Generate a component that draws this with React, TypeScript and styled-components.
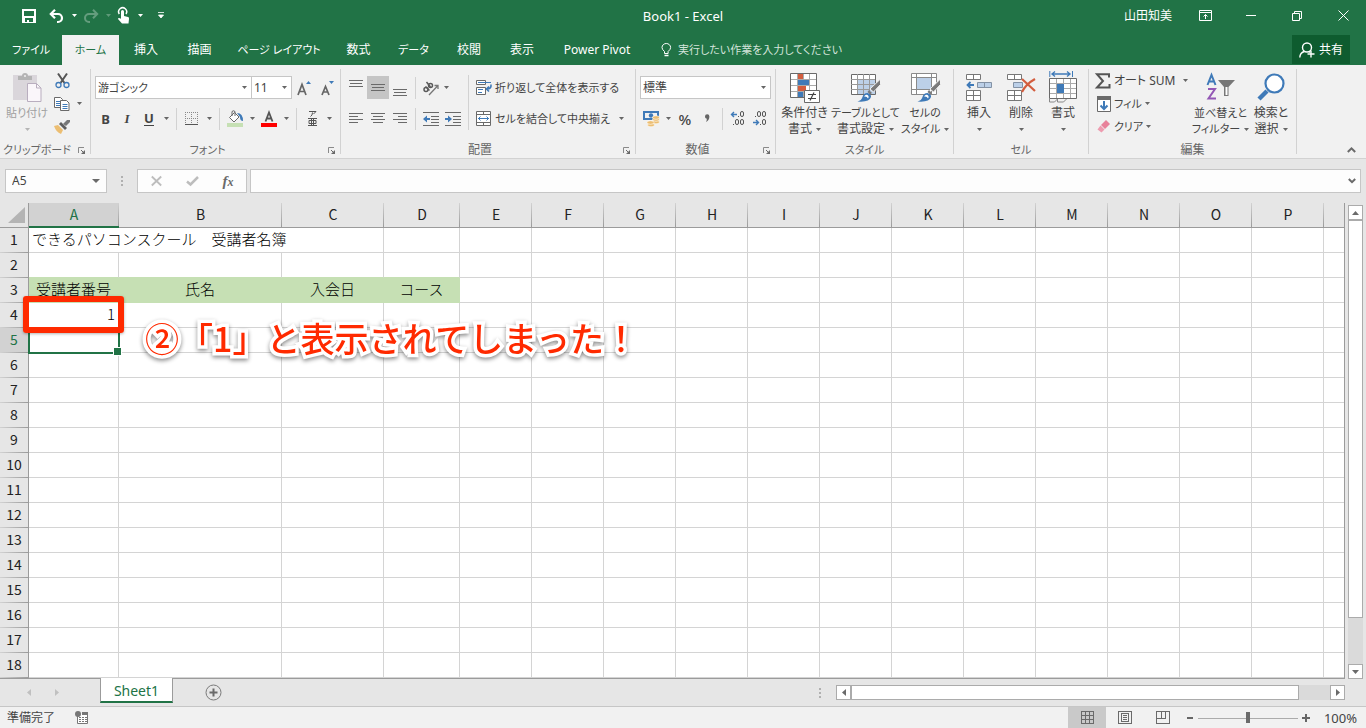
import React from "react";
import styled, { createGlobalStyle, css } from "styled-components";

const UI_FONT = `"Noto Sans", "Noto Sans CJK JP", sans-serif`;
const CELL_FONT = `"Noto Sans CJK JP", "Noto Sans", sans-serif`;

const c = {
  green: "#217346",
  darkGreen: "#0e5c2f",
  ribbon: "#f1f1f1",
  chrome: "#e6e6e6",
  line: "#d2d2d2",
  box: "#c6c6c6",
  text: "#444444",
  muted: "#666666",
  icon: "#6a6a6a",
  blue: "#3f7ab8",
  pale: "#bcd0e8",
  grid: "#d4d4d4",
  edge: "#9b9b9b",
  head: "#c6e0b4",
  red: "#ff2a00",
};

const Global = createGlobalStyle`
  * { box-sizing: border-box; }
  body { margin: 0; background: ${c.chrome}; }
  button, input, select {
    font: inherit; color: inherit; margin: 0; padding: 0;
    border: 0; border-radius: 0; background: transparent; outline: 0;
  }
  svg { display: block; flex: none; overflow: visible; }
`;

const Page = styled.div`
  display: flex;
  flex-direction: column;
  min-height: 100vh;
  overflow-x: hidden;
  font-family: ${UI_FONT};
  font-size: 12px;
  line-height: 16px;
  font-feature-settings: "palt";
  color: ${c.text};
  white-space: nowrap;
`;

/* Labels made mostly of kana are set one size smaller. */
const isKana = (s = "") => (s.match(/[ぁ-んァ-ヶー]/g) ?? []).length > 1;
const Label = styled.span<{ $kana?: boolean }>`
  font-size: ${(p) => (p.$kana ? 11 : 12)}px;
`;
const Text = ({ children }: { children?: string }) => <Label $kana={isKana(children)}>{children}</Label>;

/* ---------- title bar ---------- */
const TitleBar = styled.header`
  display: grid;
  grid-template-columns: 1fr auto 1fr;
  align-items: center;
  height: 35px;
  padding-bottom: 4px;
  background: ${c.green};
  color: #fff;
`;
const QuickAccess = styled.div`
  display: flex;
  padding-left: 14px;
`;
const Title = styled.h1`
  margin: 0;
  font-size: 13px;
  font-weight: 400;
`;
const WindowControls = styled.div`
  display: flex;
  justify-content: flex-end;
  align-items: center;
`;
const UserName = styled.span`
  margin-right: 10px;
`;
const WindowButton = styled.button`
  display: flex;
  align-items: center;
  justify-content: center;
  width: 46px;
  height: 31px;
`;

/* ---------- ribbon tabs ---------- */
const TabRow = styled.nav`
  display: flex;
  height: 30px;
  padding-right: 16px;
  background: ${c.green};
  color: #fff;
`;
const TabList = styled.div`
  display: flex;
`;
const Tab = styled.button<{ $w: number; $active?: boolean }>`
  width: ${(p) => p.$w}px;
  flex: none;
  ${(p) => p.$active && css`background: ${c.ribbon}; color: ${c.green};`}
`;
const TellMe = styled.label`
  display: flex;
  align-items: center;
  gap: 6px;
  flex: 1;
  padding-left: 15px;
`;
const TellMeInput = styled.input`
  flex: 1;
  max-width: 240px;
  font-size: 11px;
  &::placeholder { color: #d3e3da; opacity: 1; }
`;
const Share = styled.button`
  display: flex;
  align-items: center;
  justify-content: center;
  gap: 4px;
  width: 58px;
  height: 29px;
  background: ${c.darkGreen};
`;

/* ---------- ribbon ---------- */
const Ribbon = styled.section`
  display: flex;
  height: 94px;
  background: ${c.ribbon};
  border-bottom: 1px solid ${c.line};
`;
const GroupBox = styled.div<{ $w: number }>`
  display: flex;
  flex-direction: column;
  flex: none;
  width: ${(p) => p.$w}px;
`;
const GroupBody = styled.div<{ $pad?: number }>`
  display: flex;
  height: 76px;
  padding-left: ${(p) => p.$pad ?? 0}px;
`;
const GroupFoot = styled.div`
  display: flex;
  align-items: center;
  height: 17px;
`;
const GroupLabel = styled.div`
  flex: 1;
  text-align: center;
  color: ${c.muted};
`;
const Launcher = styled.button`
  display: flex;
  justify-content: center;
  width: 16px;
  padding-top: 2px;
`;
const Divider = styled.div`
  flex: none;
  width: 1px;
  margin: 4px 0;
  background: ${c.line};
`;
const Rows = styled.div`
  display: flex;
  flex-direction: column;
  gap: 8px;
  padding-top: 11px;
`;
const CompactRows = styled.div<{ $w: number }>`
  display: flex;
  flex-direction: column;
  padding-top: 4px;
  width: ${(p) => p.$w}px;
`;
const Row = styled.div`
  display: flex;
  align-items: center;
  height: 23px;
`;
const Tool = styled.button<{ $w?: number; $on?: boolean }>`
  display: flex;
  align-items: center;
  justify-content: center;
  flex: none;
  width: ${(p) => p.$w ?? 22}px;
  height: 23px;
  background: ${(p) => (p.$on ? "#c5c5c5" : "transparent")};
`;
const Sep = styled.div`
  width: 9px;
  height: 22px;
  flex: none;
  background: linear-gradient(${c.line}, ${c.line}) 4px 0 / 1px 100% no-repeat;
`;
const TallSep = styled(Sep)`
  height: 55px;
  margin-top: 10px;
`;
const Letter = styled.span<{ $kind: "b" | "i" | "u" | "p" }>`
  font-size: ${(p) => (p.$kind === "p" ? 15 : 13)}px;
  line-height: 16px;
  font-weight: ${(p) => (p.$kind === "p" ? 500 : 700)};
  ${(p) => p.$kind === "i" && css`font-style: italic; font-family: "Liberation Serif", serif;`}
  ${(p) => p.$kind === "u" && css`border-bottom: 1px solid ${c.text}; line-height: 13px;`}
`;
const Combo = styled.span<{ $w: number }>`
  display: grid;
  grid-template-columns: 1fr 14px;
  align-items: center;
  flex: none;
  width: ${(p) => p.$w}px;
  height: 23px;
  background: #fff;
  border: 1px solid ${c.box};
  & + & { border-left: 0; }
`;
const Select = styled.select<{ $kana?: boolean }>`
  grid-area: 1 / 1 / 2 / 3;
  width: 100%;
  height: 21px;
  padding-left: 2px;
  appearance: none;
  font-size: ${(p) => (p.$kana ? 11 : 12)}px;
`;
const ComboArrow = styled.span`
  grid-area: 1 / 2 / 2 / 3;
  display: flex;
  justify-content: center;
  pointer-events: none;
`;
const LabelTool = styled.button<{ $pad?: number }>`
  display: flex;
  align-items: center;
  gap: 3px;
  height: 23px;
  padding-left: ${(p) => p.$pad ?? 0}px;
`;
const Big = styled.button<{ $w: number; $off?: boolean }>`
  display: flex;
  flex-direction: column;
  align-items: center;
  flex: none;
  width: ${(p) => p.$w}px;
  height: 76px;
  padding-top: 6px;
  color: ${(p) => (p.$off ? "#a0a0a0" : c.text)};
`;
const BigIcon = styled.span`
  display: flex;
  align-items: center;
  height: 32px;
  margin-bottom: 2px;
`;
const BigLine = styled.span`
  display: flex;
  align-items: center;
  justify-content: center;
  gap: 4px;
  height: 16px;
`;
const Collapse = styled.button`
  display: flex;
  align-self: flex-end;
  margin: 0 10px 5px auto;
`;

/* ---------- formula bar ---------- */
const FormulaBar = styled.div`
  display: flex;
  align-items: center;
  height: 44px;
  padding: 0 5px;
`;
const Field = styled.div<{ $w?: number }>`
  display: flex;
  align-items: center;
  height: 24px;
  background: #fdfdfd;
  border: 1px solid ${c.box};
  ${(p) => (p.$w ? css`width: ${p.$w}px; flex: none;` : css`flex: 1; min-width: 0;`)}
`;
const FieldInput = styled.input`
  flex: 1;
  min-width: 0;
  padding-left: 6px;
`;
const FieldButton = styled.button<{ $w: number }>`
  display: flex;
  align-items: center;
  justify-content: center;
  width: ${(p) => p.$w}px;
  height: 22px;
`;
const Grip = styled.span<{ $w: number }>`
  display: flex;
  justify-content: center;
  width: ${(p) => p.$w}px;
`;
const Fx = styled.span`
  font: italic 700 15px "Liberation Serif", serif;
  color: ${c.icon};
  & > small { font-size: 12px; }
`;

/* ---------- sheet ---------- */
const Workspace = styled.main`
  display: flex;
  flex: 1;
`;
const SheetArea = styled.div`
  position: relative;
  flex: 1;
  min-width: 0;
  border-right: 1px solid ${c.edge};
  border-bottom: 1px solid ${c.edge};
  background: #fff;
`;
const Sheet = styled.table`
  width: 100%;
  table-layout: fixed;
  border-collapse: separate;
  border-spacing: 0;
  font-family: ${CELL_FONT};
  font-size: 15px;
  font-weight: 300;
  line-height: 20px;
  font-feature-settings: normal;
  color: #000;
`;
const Col = styled.col<{ $w?: number }>`
  ${(p) => p.$w && css`width: ${p.$w}px;`}
`;
const headText = css<{ $on?: boolean }>`
  height: 25px;
  font-size: 14px;
  font-weight: 400;
  color: ${(p) => (p.$on ? c.green : "#222")};
`;
const ColHead = styled.th<{ $on?: boolean }>`
  ${headText}
  padding: 0 0 2px;
  border-bottom: ${(p) => (p.$on ? `2px solid ${c.green}` : `1px solid ${c.edge}`)};
  background: linear-gradient(${c.line}, ${c.edge}) right / 1px 100% no-repeat
    ${(p) => (p.$on ? "#d2d2d2" : c.chrome)};
  &:last-child { background: ${c.chrome}; }
`;
const Corner = styled.th`
  padding: 0 3px 0 0;
  background: ${c.chrome};
  border-bottom: 1px solid ${c.edge};
  border-right: 1px solid ${c.edge};
  & > svg { margin-left: auto; }
`;
const RowHead = styled.th<{ $on?: boolean }>`
  ${headText}
  padding: 0 0 4px;
  border-right: 1px solid ${c.edge};
  background: linear-gradient(90deg, ${c.line}, ${c.edge}) bottom / 100% 1px no-repeat
    ${(p) => (p.$on ? "#d2d2d2" : c.chrome)};
`;
const Cell = styled.td<{ $fill?: boolean; $over?: boolean; $align?: string }>`
  position: relative;
  height: 25px;
  padding: 0 3px 2px;
  text-align: ${(p) => p.$align ?? "left"};
  border-right: 1px solid ${(p) => (p.$fill ? c.head : c.grid)};
  border-bottom: 1px solid ${(p) => (p.$fill || p.$over ? c.head : c.grid)};
  background: ${(p) => (p.$fill ? c.head : "#fff")};
  &:last-child { border-right: 0; }
`;
const Selection = styled.span`
  position: absolute;
  z-index: 1;
  inset: -1px -2px -2px -1px;
  border: 2px solid ${c.green};
  &::after {
    content: "";
    position: absolute;
    right: -4px;
    bottom: -4px;
    width: 7px;
    height: 7px;
    background: ${c.green};
    border: 1px solid #fff;
  }
`;
const Highlight = styled.span`
  position: absolute;
  z-index: 2;
  inset: -7px -6px -6px;
  border: 6px solid ${c.red};
  border-radius: 3px;
  box-shadow: 0 1px 3px rgba(0, 0, 0, 0.3);
`;
const Annotation = styled.p`
  position: absolute;
  z-index: 2;
  left: 145px;
  top: 113px;
  margin: 0;
  font-family: ${CELL_FONT};
  font-size: 34px;
  line-height: 44px;
  font-weight: 500;
  font-feature-settings: normal;
  color: ${c.red};
  -webkit-text-stroke: 7px #fff;
  paint-order: stroke fill;
  stroke-linejoin: round;
  filter: drop-shadow(0 2px 2px rgba(0, 0, 0, 0.45));
`;

/* ---------- scroll bars ---------- */
const VScroll = styled.div`
  display: flex;
  flex-direction: column;
  width: 15px;
  margin: 2px 3px 0;
  background: #dadada;
`;
const HScroll = styled.div`
  display: flex;
  width: 509px;
  height: 15px;
  background: #dadada;
`;
const ScrollButton = styled.button`
  display: flex;
  align-items: center;
  justify-content: center;
  flex: none;
  width: 15px;
  height: 15px;
  background: #fff;
  border: 1px solid #ababab;
`;
const Thumb = styled.div<{ $size: string }>`
  flex: 0 0 ${(p) => p.$size};
  background: #fff;
  border: 1px solid #ababab;
`;
const Fill = styled.div`
  flex: 1;
`;

/* ---------- sheet tabs & status ---------- */
const SheetTabs = styled.div`
  display: flex;
  align-items: center;
  height: 27px;
  padding-right: 21px;
`;
const Arrows = styled.div`
  display: flex;
  width: 100px;
  padding-left: 15px;
`;
const SheetTab = styled.button`
  position: relative;
  align-self: flex-start;
  width: 73px;
  height: 25px;
  margin-top: -1px;
  padding-top: 2px;
  background: #fff;
  border: solid ${c.edge};
  border-width: 0 1px;
  border-bottom: 2px solid ${c.green};
  color: ${c.green};
  font-size: 14px;
`;
const AddSheet = styled.button`
  margin-left: 32px;
`;
const StatusBar = styled.footer`
  display: flex;
  align-items: center;
  height: 22px;
  padding: 0 9px 0 7px;
  border-top: 1px solid ${c.box};
  background: ${c.ribbon};
`;
const Macro = styled.button`
  margin-left: 20px;
`;
const ViewButton = styled.button<{ $on?: boolean }>`
  display: flex;
  align-items: center;
  justify-content: center;
  width: 38px;
  height: 21px;
  background: ${(p) => (p.$on ? "#c9c9c9" : "transparent")};
`;
const ZoomButton = styled.button`
  display: flex;
  justify-content: center;
  width: 16px;
`;
const ZoomSlider = styled.input`
  appearance: none;
  width: 100px;
  height: 12px;
  background: linear-gradient(#ababab, #ababab) 0 6px / 100% 1px no-repeat;
  &::-webkit-slider-thumb {
    appearance: none;
    width: 4px;
    height: 11px;
    background: ${c.icon};
  }
`;
const ZoomValue = styled.span`
  width: 43px;
  text-align: right;
  font-size: 13px;
`;

/* ---------- icons ---------- */
const Ico = ({ w, h, children, crisp }: { w: number; h: number; children: React.ReactNode; crisp?: boolean }) => (
  <svg width={w} height={h} viewBox={`0 0 ${w} ${h}`} fill="none" shapeRendering={crisp ? "crispEdges" : "auto"} aria-hidden="true">
    {children}
  </svg>
);
const Caret = ({ color = c.muted }: { color?: string }) => (
  <Ico w={5} h={3}><path d="M0 0h5L2.5 3z" fill={color} /></Ico>
);
const LauncherIcon = () => (
  <Ico w={8} h={8}>
    <path d="M.5 6V.5H6" stroke="#8a8a8a" />
    <path d="M3 3l2.500 2.500" stroke={c.icon} />
    <path d="M7 3v4H3z" fill={c.icon} />
  </Ico>
);
const Lines = ({ rows }: { rows: [number, number, number][] }) => (
  <Ico w={14} h={18} crisp>
    {rows.map(([x, y, w]) => <rect key={y} x={x} y={y} width={w} height={1} fill={c.icon} />)}
  </Ico>
);
const SaveIcon = () => (
  <Ico w={14} h={14}>
    <path fillRule="evenodd" fill="#fff" d="M0 0h14v14H0zM2 2v5h10V2zM3 9v4h2v-2h2v2h4V9z" />
  </Ico>
);
const UndoIcon = () => (
  <Ico w={16} h={14}>
    <path d="M6 .8 1.800 5 6 9.200M2 5h7a4 4 0 0 1 0 8H8" stroke="#fff" strokeWidth={2.2} />
  </Ico>
);
const RedoIcon = () => (
  <Ico w={16} h={14}>
    <path opacity=".3" d="m10 .8 4.200 4.200L10 9.200M14 5H6a4 4 0 0 0 0 8h1" stroke="#fff" strokeWidth={2} />
  </Ico>
);
const TouchIcon = () => (
  <Ico w={14} h={17}>
    <path d="M2.300 7A4 4 0 1 1 9 7" stroke="#fff" strokeWidth={1.500} />
    <path d="M4 4.500a1.500 1.500 0 0 1 3 0V9l4 1c1 .3 1 1 1 2l-.5 4.500H5L1 12c0-1 1-1.300 3-.3z" fill="#fff" />
  </Ico>
);
const PasteIcon = () => (
  <Ico w={29} h={30}>
    <path d="M0 3h24v25H0z" fill="#dad6db" />
    <path d="M5 8V4h4a3 3 0 0 1 6 0h4v4z" fill="#b4b4b4" />
    <circle cx="12" cy="4" r="1" fill="#f1f1f1" />
    <path d="M14.500 11.500h9l4.500 4.500v13.500H14.500z" fill="#faf6fa" stroke="#b9aebf" />
    <path d="M23.500 11.500V16H28" stroke="#b9aebf" />
  </Ico>
);
const CutIcon = () => (
  <Ico w={15} h={16}>
    <path d="M3 .5 9.500 10M12 .5 5.500 10" stroke="#555" strokeWidth={2} />
    <circle cx="3.500" cy="12" r="2.500" stroke={c.blue} strokeWidth={1.300} />
    <circle cx="11.500" cy="12" r="2.500" stroke={c.blue} strokeWidth={1.300} />
  </Ico>
);
const CopyIcon = () => (
  <Ico w={16} h={14}>
    <path d="M.5.500h6l2 2v8h-8z" fill="#fff" stroke={c.icon} />
    <path d="M2 4.500h4M2 6.500h4M2 8.500h4" stroke={c.blue} />
    <path d="M6.500 3.500h6l2.500 2.500v7.500H6.500z" fill="#fff" stroke={c.icon} />
    <path d="M8.500 7.500h5M8.500 9.500h5M8.500 11.500h5" stroke={c.blue} />
  </Ico>
);
const BrushIcon = () => (
  <Ico w={16} h={14}>
    <path d="m0 6 4-1 5 5-2 4q-5-2-7-8" fill="#ecbe72" />
    <path d="m5 4 2-2 6 6-2 2z" fill="#5f5f5f" />
    <path d="m9 4 4-4 3 0v2l-4 4z" fill="#777" />
  </Ico>
);
const GrowIcon = ({ up }: { up?: boolean }) => (
  <Ico w={14} h={14}>
    <path d={up ? "M1 14 5 3.500 9 14M2.500 10.500h5.500" : "M2 14 5.500 5.500 9 14M3.500 11h4.500"} stroke="#666" strokeWidth={1.700} />
    <path d={up ? "m9 3 2.500-3L14 3z" : "m9 0h5l-2.500 3z"} fill={c.blue} />
  </Ico>
);
const BorderIcon = () => (
  <Ico w={14} h={14} crisp>
    <path d="M.5 0v13M6.500 0v13M12.500 0v13M0 .5h13M0 6.500h13" stroke="#8a8a8a" strokeDasharray="1 1" />
    <path d="M0 12.500h13" stroke="#555" />
  </Ico>
);
const BucketIcon = () => (
  <Ico w={17} h={17}>
    <path d="M7.500 2.500 12 7l-5 5-4.500-4.500z" fill="#fff" stroke={c.icon} />
    <path d="M5 6V1.500q1.500-1.500 3 0V6" stroke={c.icon} />
    <path d="M10 3q6 0 6 8-3 0-3-4z" fill={c.blue} />
    <path d="M0 13h16v4H0z" fill={c.head} />
  </Ico>
);
const FontColorIcon = () => (
  <Ico w={17} h={17}>
    <path d="M4.500 11.500 8 2.500l3.500 9M5.500 8.500h5" stroke="#555" strokeWidth={1.800} />
    <path d="M0 13h16v4H0z" fill="#f00" />
  </Ico>
);
const PhoneticIcon = () => (
  <Ico w={9} h={17}>
    <path d="M1 1.500h7L5.500 4M4.500 2.500q0 3-2 4" stroke="#555" />
    <path d="M0 8.500h9M0 15.500h9M3.500 8v7M5.500 8v7M1 10.500h7v3H1z" stroke="#555" />
  </Ico>
);
const OrientIcon = () => (
  <Ico w={18} h={16}>
    <g stroke="#5a5a5a" strokeWidth={1.500}>
      <circle cx="4" cy="9.500" r="2" />
      <path d="M3.500 6.500l4 4" />
      <circle cx="8.500" cy="5.500" r="2" />
      <path d="M4.500 2l4 5" />
    </g>
    <path d="M7 15 15.500 6M12.500 5.500H16V9" stroke="#777" strokeWidth={1.300} />
  </Ico>
);
const IndentIcon = ({ right }: { right?: boolean }) => (
  <Ico w={16} h={14}>
    <path d="M0 .5h16M8 4.500h8M8 7.500h8M8 10.500h8M0 13.500h16" stroke={c.icon} />
    <path d={right ? "M0 6h3V3.500L7 7l-4 3.500V8H0z" : "M7 6H4V3.500L0 7l4 3.500V8h3z"} fill={c.blue} />
  </Ico>
);
const WrapIcon = () => (
  <Ico w={16} h={16}>
    <path d="M.5.500h9v4h-9zM.5 7.500h9v7h-9z" fill="#fff" stroke={c.icon} />
    <path d="M2 2.500h13M2 9.500h5M2 12.500h4" stroke={c.blue} />
    <path d="M15 4.500q.5 4.500-4 4.500M13 6.500 10.500 9l2.500 2.500" stroke={c.blue} strokeWidth={1.600} />
  </Ico>
);
const MergeIcon = () => (
  <Ico w={16} h={16}>
    <path d="M.5.500h14v14H.5zM.5 3.500h14M.5 11.500h14M7.500.500v3M7.500 11.500v3" fill="#fff" stroke={c.icon} />
    <path d="M2 7.500h11M4.500 5.500 2.500 7.500l2 2M10.500 5.500l2 2-2 2" stroke={c.blue} />
  </Ico>
);
const CurrencyIcon = () => (
  <Ico w={17} h={17}>
    <path fillRule="evenodd" d="M0 1h16v9H0zM2 3v5h12V3z" fill={c.blue} />
    <circle cx="8" cy="5.500" r="2.200" fill={c.blue} />
    <g fill="#ecbe72" stroke="#fff" strokeWidth=".6">
      <ellipse cx="13" cy="12" rx="3.500" ry="1.800" /><ellipse cx="13" cy="9.500" rx="3.500" ry="1.800" />
      <ellipse cx="13" cy="7.500" rx="3.500" ry="1.800" /><ellipse cx="8" cy="15" rx="3.500" ry="1.800" />
      <ellipse cx="7.500" cy="12.500" rx="3.500" ry="1.800" />
    </g>
  </Ico>
);
const CommaIcon = () => (
  <Ico w={6} h={9}><path d="M1 2.500a2.200 2.200 0 0 1 4.400 0Q5.400 6 2 8q1-2 .8-3.300A2 2 0 0 1 1 2.500" fill="#666" /></Ico>
);
const DecimalIcon = ({ inc }: { inc?: boolean }) => (
  <Ico w={16} h={15}>
    <g stroke="#555" strokeWidth={1}>
      {inc ? (
        <>
          <path d="M8 5.500h1M3 13.500h1" /><rect x="10.500" y=".5" width="3" height="5" rx="1.500" />
          <rect x="5.500" y="8.500" width="3" height="5" rx="1.500" /><rect x="10.500" y="8.500" width="3" height="5" rx="1.500" />
        </>
      ) : (
        <>
          <path d="M3 5.500h1M8 13.500h1" /><rect x="5.500" y=".5" width="3" height="5" rx="1.500" />
          <rect x="10.500" y=".5" width="3" height="5" rx="1.500" /><rect x="10.500" y="8.500" width="3" height="5" rx="1.500" />
        </>
      )}
    </g>
    <path d={inc ? "M7 3.500H1.500M4 1 1.500 3.500 4 6" : "M1 11.500h5.500M4 9l2.500 2.500L4 14"} stroke={c.blue} strokeWidth={1.400} />
  </Ico>
);
const ConditionalIcon = () => (
  <Ico w={31} h={31}>
    <path d="M1.500 1.500h26v24h-26z" fill="#fff" stroke={c.icon} />
    <path d="M8.500 2v23M14.500 2v23M20.500 2v23M2 7.500h25M2 13.500h25M2 19.500h25" stroke="#aaa" />
    <path d="M9 2h5v5H9zM9 14h8v5H9z" fill="#d35d3e" />
    <path d="M9 8h11v5H9zM9 20h5v5H9z" fill={c.blue} />
    <path d="M15.500 18.500h15v12h-15z" fill="#fff" stroke={c.icon} />
    <path d="M19 22.500h8M19 26.500h8M25 20.500l-4 8" stroke="#444" strokeWidth={1.200} />
  </Ico>
);
const brush = (
  <>
    <path d="M30.500 7v5.500l-7 7.500-3.500-3z" fill="#7a7a7a" stroke="#f1f1f1" />
    <path d="m19 18 3 3-2 1.500-2.500-2.500z" fill="#7a7a7a" />
    <path d="M7.500 29.500q4-1 5-4.500 1-4 5-4 4 1 3.500 4-1.500 5.500-13.500 4.500" fill={c.blue} />
    <path d="M14 24.500q1.500-2.500 3.500-1.500 2 1.500 .5 3.500-1-2.500-4-2" fill="#fff" />
  </>
);
const TableStyleIcon = () => (
  <Ico w={31} h={30}>
    <path d="M1.500 2.500h24v20h-24z" fill="#fff" stroke={c.icon} />
    <path d="M8 8h17v14H8z" fill={c.pale} />
    <path d="M7.500 2v20M13.500 2v20M19.500 2v20M1 7.500h24M1 12.500h24M1 17.500h24" stroke="#999" />
    {brush}
  </Ico>
);
const CellStyleIcon = () => (
  <Ico w={31} h={30}>
    <path d="M1.500 1.500h25v21h-25zM6.500 1v21M21.500 1v21M1 5.500h25M1 17.500h25" fill="#fff" stroke="#8a8a8a" />
    <path d="M7 6h14v11H7z" fill={c.pale} />
    {brush}
  </Ico>
);
const InsertIcon = () => (
  <Ico w={28} h={28}>
    <path d="M1.500 1.500h14v5h-14zM8.500 1.500v5M1.500 17.500h14v10h-14zM8.500 17.500v10M1.500 22.500h14" fill="#fff" stroke="#777" />
    <path d="M12.500 9.500h14v5h-14zM19.500 9.500v5" fill={c.pale} stroke="#8392a5" />
    <path d="M9 12H3M5.500 9 2.500 12l3 3" stroke={c.blue} strokeWidth={1.800} />
  </Ico>
);
const DeleteIcon = () => (
  <Ico w={30} h={28}>
    <path d="M1.500 1.500h14v5h-14zM8.500 1.500v5M1.500 17.500h14v10h-14zM8.500 17.500v10M1.500 22.500h14" fill="#fff" stroke="#777" />
    <path d="M7.500 9.500h9v5h-9z" fill={c.pale} stroke="#8392a5" />
    <path d="m16 6 13 12M29 6Q20 11 16 19" stroke="#d35d3e" strokeWidth={2.200} />
  </Ico>
);
const FormatIcon = () => (
  <Ico w={29} h={32}>
    <path d="M.8 0v6M23.500 0v6" stroke={c.blue} />
    <path d="M2.500 3h19M6 .5 3 3l3 2.500M18 .5 21 3l-3 2.500" stroke={c.blue} strokeWidth={1.300} />
    <path d="M.5 7.500h27v20H.5z" fill="#fff" stroke={c.icon} />
    <path d="M7.500 8v19M14.500 8v19M21.500 8v19M1 12.500h26M1 17.500h26M1 22.500h26" stroke="#aaa" />
    <path d="M8 13h7v9H8z" fill={c.blue} />
    <path d="M.5 27v4h5l3-3v3h6l3-3" stroke="#888" />
  </Ico>
);
const SumIcon = () => (
  <Ico w={16} h={16}><path d="M14 4.500V1.200H2L8 8l-6 6.500h12.500V11" stroke="#555" strokeWidth={2} /></Ico>
);
const FillIcon = () => (
  <Ico w={14} h={16}>
    <path d="M.5.500h13v15H.5z" fill="#fff" stroke={c.icon} /><path d="M0 0h14v4H0z" fill={c.icon} />
    <path d="M7 5v8M3.500 9.500 7 13l3.500-3.500" stroke={c.blue} strokeWidth={2} />
  </Ico>
);
const EraserIcon = () => (
  <Ico w={14} h={13}><path d="m4 5 5-5 4 4-5 5z" fill="#e8819a" /><path d="m3.500 5.500 4 4-3 3-4-3z" fill="#ee9cb0" /></Ico>
);
const SortIcon = () => (
  <Ico w={30} h={30}>
    <path d="M1.500 13 5.500 3l4 10M3 9.500h5" stroke={c.blue} strokeWidth={2} />
    <path d="M2 17h7L2.500 26.500H10" stroke="#9357b5" strokeWidth={2} />
    <path d="M12 8h17l-6.500 7v9H18v-9z" fill="#777" /><path d="M19.500 15h2v8h-2z" fill="#fff" />
  </Ico>
);
const FindIcon = () => (
  <Ico w={28} h={30}>
    <path d="m2 27 8-8" stroke={c.blue} strokeWidth={4.500} />
    <circle cx="17.500" cy="11.500" r="9" fill="#fff" stroke={c.blue} strokeWidth={2.200} />
  </Ico>
);

/* ---------- composite pieces ---------- */
const CaretTool = ({ label, w = 12 }: { label: string; w?: number }) => (
  <Tool $w={w} aria-label={label}><Caret /></Tool>
);
const Group = ({ w, label, launcher, pad, children }: {
  w: number; label: string; launcher?: boolean; pad?: number; children: React.ReactNode;
}) => (
  <>
    <GroupBox $w={w}>
      <GroupBody $pad={pad}>{children}</GroupBody>
      <GroupFoot>
        <GroupLabel><Text>{label}</Text></GroupLabel>
        {launcher && <Launcher aria-label={`${label}の設定`}><LauncherIcon /></Launcher>}
      </GroupFoot>
    </GroupBox>
    <Divider />
  </>
);
const BigButton = ({ w, icon, top, bottom, off }: {
  w: number; icon: React.ReactNode; top: string; bottom?: string; off?: boolean;
}) => (
  <Big $w={w} $off={off}>
    <BigIcon>{icon}</BigIcon>
    <BigLine><Text>{top}</Text></BigLine>
    <BigLine>{bottom && <Text>{bottom}</Text>}<Caret color={off ? "#b5b5b5" : undefined} /></BigLine>
  </Big>
);
const ComboBox = ({ w, label, value }: { w: number; label: string; value: string }) => (
  <Combo $w={w}>
    <Select aria-label={label} defaultValue={value} $kana={isKana(value)}><option>{value}</option></Select>
    <ComboArrow><Caret /></ComboArrow>
  </Combo>
);

const tabs: [string, number][] = [
  ["ファイル", 62], ["ホーム", 57], ["挿入", 54], ["描画", 53], ["ページ レイアウト", 106],
  ["数式", 53], ["データ", 57], ["校閲", 54], ["表示", 52], ["Power Pivot", 98],
];
const letters = "ABCDEFGHIJKLMNOP".split("");
const widths = [29, 90, 163, 102, 76, ...Array(12).fill(72)];
const headings = ["受講者番号", "氏名", "入会日", "コース"];
const rowNumbers = Array.from({ length: 18 }, (_, i) => i + 1);

const SheetRow = ({ n }: { n: number }) => (
  <tr>
    <RowHead scope="row" $on={n === 5}>{n}</RowHead>
    {n === 1 && <Cell colSpan={3}>できるパソコンスクール　受講者名簿</Cell>}
    {Array.from({ length: 17 }, (_, i) => i).slice(n === 1 ? 3 : 0).map((i) => (
      <Cell
        key={i}
        $fill={n === 3 && i < 4}
        $over={n === 2 && i < 4}
        $align={n === 3 ? "center" : n === 4 ? "right" : undefined}
      >
        {n === 3 && headings[i]}
        {n === 4 && i === 0 && <>1<Highlight /></>}
        {n === 5 && i === 0 && <Selection />}
      </Cell>
    ))}
  </tr>
);

export default function App() {
  return (
    <Page>
      <Global />
      <TitleBar>
        <QuickAccess>
          <Tool $w={30} aria-label="上書き保存"><SaveIcon /></Tool>
          <Tool $w={26} aria-label="元に戻す"><UndoIcon /></Tool>
          <Tool $w={8} aria-label="元に戻す履歴"><Caret color="#fff" /></Tool>
          <Tool $w={26} aria-label="やり直し"><RedoIcon /></Tool>
          <Tool $w={8} aria-label="やり直し履歴"><Caret color="#5f9a79" /></Tool>
          <Tool $w={24} aria-label="タッチ/マウス モードの切り替え"><TouchIcon /></Tool>
          <Tool $w={8} aria-label="モード"><Caret color="#fff" /></Tool>
          <Tool $w={34} aria-label="クイック アクセスのカスタマイズ">
            <Ico w={6} h={7}><path d="M0 .5h6M.5 3h5L3 6z" stroke="#fff" fill="#fff" strokeWidth=".8" /></Ico>
          </Tool>
        </QuickAccess>
        <Title>Book1 - Excel</Title>
        <WindowControls>
          <UserName>山田知美</UserName>
          <WindowButton aria-label="リボンの表示オプション">
            <Ico w={13} h={11}><path d="M.5.500h12v10H.5zM.5 2.500h12M6.500 9V4.500M4.500 6.500l2-2 2 2" stroke="#fff" /></Ico>
          </WindowButton>
          <WindowButton aria-label="最小化"><Ico w={10} h={1}><path d="M0 .5h10" stroke="#fff" /></Ico></WindowButton>
          <WindowButton aria-label="元に戻す">
            <Ico w={10} h={10}><path d="M.5 2.500h7v7h-7zM2.500 2.500v-2h7v7h-2" stroke="#fff" /></Ico>
          </WindowButton>
          <WindowButton aria-label="閉じる"><Ico w={11} h={11}><path d="m.5.500 10 10m0-10-10 10" stroke="#fff" /></Ico></WindowButton>
        </WindowControls>
      </TitleBar>

      <TabRow>
        <TabList>
          {tabs.map(([name, w]) => (
            <Tab key={name} $w={w} $active={name === "ホーム"}><Text>{name}</Text></Tab>
          ))}
        </TabList>
        <TellMe>
          <Ico w={11} h={14}>
            <path d="M3.500 10.500v-2Q1 6.500 1 4.500a4.300 4 0 0 1 8.600 0q0 2-2.500 4v2z" stroke="#fff" />
            <path d="M3.500 12.500h4" stroke="#fff" strokeWidth={1.500} />
          </Ico>
          <TellMeInput aria-label="操作アシスト" placeholder="実行したい作業を入力してください" />
        </TellMe>
        <Share>
          <Ico w={16} h={16}>
            <circle cx="8" cy="5.500" r="4.500" stroke="#fff" strokeWidth={1.400} />
            <path d="M.8 15.500q.2-5 4.700-6M10 9.500l1 1M12 8.500v7M8.500 12h7" stroke="#fff" strokeWidth={1.400} />
          </Ico>
          共有
        </Share>
      </TabRow>

      <Ribbon>
        <Group w={90} label="クリップボード" launcher>
          <BigButton w={54} off icon={<PasteIcon />} top="貼り付け" />
          <CompactRows $w={34}>
            <Row><Tool $w={16} aria-label="切り取り"><CutIcon /></Tool></Row>
            <Row><Tool $w={16} aria-label="コピー"><CopyIcon /></Tool><CaretTool w={18} label="コピーのオプション" /></Row>
            <Row><Tool $w={16} aria-label="書式のコピー/貼り付け"><BrushIcon /></Tool></Row>
          </CompactRows>
        </Group>

        <Group w={249} label="フォント" launcher pad={4}>
          <Rows>
            <Row>
              <ComboBox w={157} label="フォント名" value="游ゴシック" />
              <ComboBox w={40} label="フォント サイズ" value="11" />
              <Tool $w={24} aria-label="フォント サイズの拡大"><GrowIcon up /></Tool>
              <Tool aria-label="フォント サイズの縮小"><GrowIcon /></Tool>
            </Row>
            <Row>
              <Tool $w={21} aria-label="太字"><Letter $kind="b">B</Letter></Tool>
              <Tool aria-label="斜体"><Letter $kind="i">I</Letter></Tool>
              <Tool aria-label="下線"><Letter $kind="u">U</Letter></Tool>
              <CaretTool label="下線の種類" />
              <Sep />
              <Tool aria-label="罫線"><BorderIcon /></Tool>
              <CaretTool label="罫線の種類" />
              <Sep />
              <Tool aria-label="塗りつぶしの色"><BucketIcon /></Tool>
              <CaretTool label="塗りつぶしの色の一覧" />
              <Tool aria-label="フォントの色"><FontColorIcon /></Tool>
              <CaretTool label="フォントの色の一覧" />
              <Sep />
              <Tool aria-label="ふりがなの表示"><PhoneticIcon /></Tool>
              <CaretTool label="ふりがなの設定" />
            </Row>
          </Rows>
        </Group>

        <Group w={294} label="配置" launcher pad={4}>
          <Rows>
            <Row>
              <Tool aria-label="上揃え"><Lines rows={[[0, 1, 14], [1, 4, 12], [0, 7, 14]]} /></Tool>
              <Tool $on aria-label="上下中央揃え"><Lines rows={[[0, 5, 14], [1, 8, 12], [0, 11, 14]]} /></Tool>
              <Tool aria-label="下揃え"><Lines rows={[[0, 10, 14], [1, 13, 12], [0, 16, 14]]} /></Tool>
              <Sep />
              <Tool aria-label="方向"><OrientIcon /></Tool>
              <CaretTool w={8} label="方向の一覧" />
            </Row>
            <Row>
              <Tool aria-label="左揃え"><Lines rows={[[0, 3, 14], [0, 6, 9], [0, 9, 14], [0, 12, 9]]} /></Tool>
              <Tool aria-label="中央揃え"><Lines rows={[[0, 3, 14], [2, 6, 10], [0, 9, 14], [2, 12, 10]]} /></Tool>
              <Tool aria-label="右揃え"><Lines rows={[[0, 3, 14], [5, 6, 9], [0, 9, 14], [5, 12, 9]]} /></Tool>
              <Sep />
              <Tool aria-label="インデントを減らす"><IndentIcon /></Tool>
              <Tool aria-label="インデントを増やす"><IndentIcon right /></Tool>
            </Row>
          </Rows>
          <TallSep />
          <Rows>
            <LabelTool $pad={3}><WrapIcon /><Text>折り返して全体を表示する</Text></LabelTool>
            <Row>
              <LabelTool $pad={3}><MergeIcon /><Text>セルを結合して中央揃え</Text></LabelTool>
              <CaretTool w={24} label="結合の種類" />
            </Row>
          </Rows>
        </Group>

        <Group w={139} label="数値" launcher pad={4}>
          <Rows>
            <ComboBox w={131} label="表示形式" value="標準" />
            <Row>
              <Tool aria-label="通貨表示形式"><CurrencyIcon /></Tool>
              <CaretTool label="通貨の一覧" />
              <Tool aria-label="パーセント スタイル"><Letter $kind="p">%</Letter></Tool>
              <Tool aria-label="桁区切りスタイル"><CommaIcon /></Tool>
              <Sep />
              <Tool aria-label="小数点以下の表示桁数を増やす"><DecimalIcon inc /></Tool>
              <Tool aria-label="小数点以下の表示桁数を減らす"><DecimalIcon /></Tool>
            </Row>
          </Rows>
        </Group>

        <Group w={177} label="スタイル" pad={2}>
          <BigButton w={53} icon={<ConditionalIcon />} top="条件付き" bottom="書式" />
          <BigButton w={69} icon={<TableStyleIcon />} top="テーブルとして" bottom="書式設定" />
          <BigButton w={50} icon={<CellStyleIcon />} top="セルの" bottom="スタイル" />
        </Group>

        <Group w={134} label="セル" pad={4}>
          <BigButton w={42} icon={<InsertIcon />} top="挿入" />
          <BigButton w={42} icon={<DeleteIcon />} top="削除" />
          <BigButton w={42} icon={<FormatIcon />} top="書式" />
        </Group>

        <Group w={207} label="編集" pad={6}>
          <CompactRows $w={98}>
            <Row><LabelTool><SumIcon />オート SUM</LabelTool><CaretTool w={20} label="オート SUM の一覧" /></Row>
            <LabelTool $pad={2}><FillIcon /><Text>フィル</Text><Caret /></LabelTool>
            <LabelTool $pad={2}><EraserIcon /><Text>クリア</Text><Caret /></LabelTool>
          </CompactRows>
          <BigButton w={55} icon={<SortIcon />} top="並べ替えと" bottom="フィルター" />
          <BigButton w={46} icon={<FindIcon />} top="検索と" bottom="選択" />
        </Group>
        <Collapse aria-label="リボンを折りたたむ">
          <Ico w={9} h={6}><path d="m.8 5 3.700-3.700L8.200 5" stroke={c.icon} strokeWidth={2} /></Ico>
        </Collapse>
      </Ribbon>

      <FormulaBar>
        <Field $w={102}>
          <FieldInput aria-label="名前ボックス" defaultValue="A5" />
          <FieldButton $w={20} aria-label="名前の一覧"><Ico w={8} h={5}><path d="M0 0h8L4 4z" fill={c.icon} /></Ico></FieldButton>
        </Field>
        <Grip $w={30}><Ico w={2} h={10} crisp><path d="M0 0h2v2H0zM0 4h2v2H0zM0 8h2v2H0z" fill="#b0b0b0" /></Ico></Grip>
        <Field $w={110}>
          <FieldButton $w={36} aria-label="キャンセル"><Ico w={11} h={10}><path d="m.8.500 9.400 9m0-9-9.400 9" stroke="#bdbdbd" strokeWidth={1.800} /></Ico></FieldButton>
          <FieldButton $w={36} aria-label="入力"><Ico w={13} h={10}><path d="m1 5.500 3.500 3L12 1" stroke="#bdbdbd" strokeWidth={2.500} /></Ico></FieldButton>
          <FieldButton $w={36} aria-label="関数の挿入"><Fx>f<small>x</small></Fx></FieldButton>
        </Field>
        <Grip $w={3} />
        <Field>
          <FieldInput aria-label="数式バー" />
          <FieldButton $w={16} aria-label="数式バーの展開"><Ico w={8} h={6}><path d="m.8 1 3.200 3.200L7.200 1" stroke={c.icon} strokeWidth={2} /></Ico></FieldButton>
        </Field>
      </FormulaBar>

      <Workspace>
        <SheetArea>
          <Sheet>
            <colgroup>
              {widths.map((w, i) => <Col key={i} $w={w} />)}
              <Col />
            </colgroup>
            <thead>
              <tr>
                <Corner aria-label="すべて選択"><Ico w={17} h={16}><path d="M17 0v16H0z" fill="#b4b4b4" /></Ico></Corner>
                {letters.map((l) => <ColHead key={l} scope="col" $on={l === "A"}>{l}</ColHead>)}
                <ColHead aria-label="Q" />
              </tr>
            </thead>
            <tbody>{rowNumbers.map((n) => <SheetRow key={n} n={n} />)}</tbody>
          </Sheet>
          <Annotation>②「1」と表示されてしまった！</Annotation>
        </SheetArea>
        <VScroll>
          <ScrollButton aria-label="上へスクロール"><Ico w={7} h={4}><path d="M0 4h7L3.500 0z" fill={c.icon} /></Ico></ScrollButton>
          <Thumb $size="84%" />
          <Fill />
          <ScrollButton aria-label="下へスクロール"><Ico w={7} h={4}><path d="M0 0h7L3.500 4z" fill={c.icon} /></Ico></ScrollButton>
        </VScroll>
      </Workspace>

      <SheetTabs>
        <Arrows>
          <Tool $w={28} aria-label="前のシート"><Ico w={4} h={7}><path d="M4 0v7L0 3.500z" fill="#c0c0c0" /></Ico></Tool>
          <Tool $w={28} aria-label="次のシート"><Ico w={4} h={7}><path d="M0 0v7l4-3.500z" fill="#c0c0c0" /></Ico></Tool>
        </Arrows>
        <SheetTab>Sheet1</SheetTab>
        <AddSheet aria-label="新しいシート">
          <Ico w={17} h={17}><circle cx="8.500" cy="8.500" r="7.500" stroke="#7a7a7a" /><path d="M8.500 4.500v8M4.500 8.500h8" stroke={c.icon} strokeWidth={2} /></Ico>
        </AddSheet>
        <Fill />
        <Grip $w={32}><Ico w={2} h={10} crisp><path d="M0 0h2v2H0zM0 4h2v2H0zM0 8h2v2H0z" fill="#b0b0b0" /></Ico></Grip>
        <HScroll>
          <ScrollButton aria-label="左へスクロール"><Ico w={4} h={7}><path d="M4 0v7L0 3.500z" fill={c.icon} /></Ico></ScrollButton>
          <Thumb $size="88%" />
          <Fill />
          <ScrollButton aria-label="右へスクロール"><Ico w={4} h={7}><path d="M0 0v7l4-3.500z" fill={c.icon} /></Ico></ScrollButton>
        </HScroll>
      </SheetTabs>

      <StatusBar>
        準備完了
        <Macro aria-label="マクロの記録">
          <Ico w={14} h={13}>
            <path d="M2.500 3v9.500h10V3" fill="#fff" stroke="#777" /><path d="M7 1h6v3H7z" fill="#777" />
            <path d="M4 6.500h8M4 8.500h8M4 10.500h8" stroke="#777" strokeDasharray="2 1" /><circle cx="3" cy="3" r="3" fill="#777" />
          </Ico>
        </Macro>
        <Fill />
        <ViewButton $on aria-label="標準"><Ico w={13} h={13} crisp><path d="M.5.500h12v12H.5zM4.500 0v13M8.500 0v13M0 4.500h13M0 8.500h13" stroke={c.icon} /></Ico></ViewButton>
        <ViewButton aria-label="ページ レイアウト"><Ico w={14} h={13} crisp><path d="M.5.500h13v12H.5zM3.500 2.500h7v8h-7zM5 4.500h4M5 6.500h4M5 8.500h4" stroke={c.icon} /></Ico></ViewButton>
        <ViewButton aria-label="改ページ プレビュー"><Ico w={14} h={13} crisp><path d="M.5.500h13v12H.5zM5.500 0v7M9.500 0v7M0 7.500h10" stroke={c.icon} /></Ico></ViewButton>
        <ZoomButton aria-label="縮小"><Ico w={6} h={2} crisp><path d="M0 0h6v2H0z" fill="#666" /></Ico></ZoomButton>
        <ZoomSlider type="range" aria-label="ズーム" defaultValue={50} />
        <ZoomButton aria-label="拡大"><Ico w={8} h={8} crisp><path d="M3 0h2v3h3v2H5v3H3V5H0V3h3z" fill="#666" /></Ico></ZoomButton>
        <ZoomValue>100%</ZoomValue>
      </StatusBar>
    </Page>
  );
}
